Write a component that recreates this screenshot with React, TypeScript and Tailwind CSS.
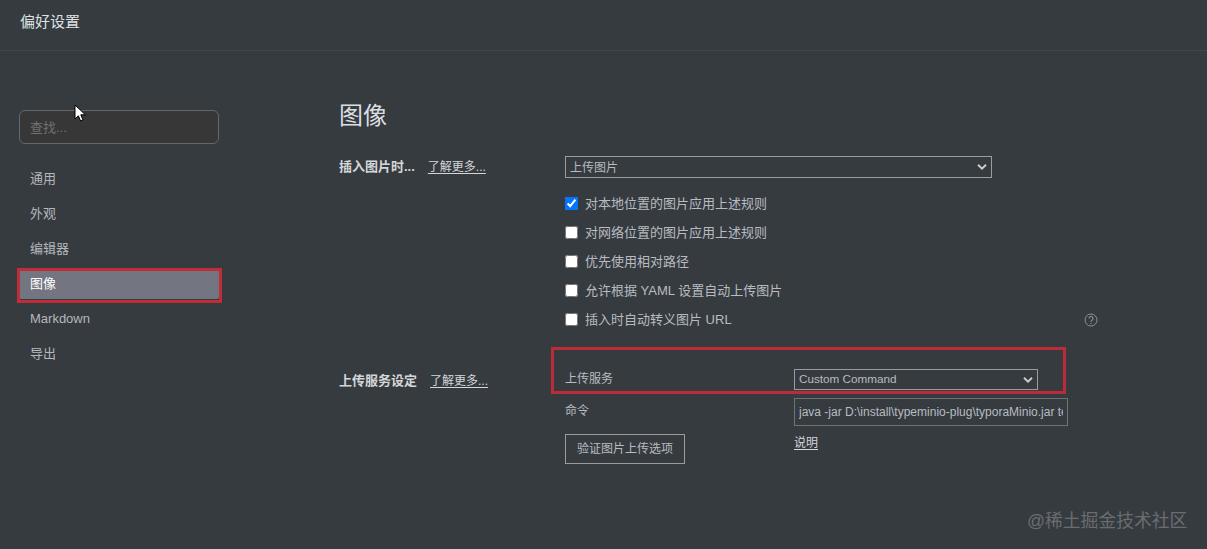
const font = "font-['Liberation_Sans','Noto_Sans_CJK_SC',sans-serif]";

function Nav({ label, active }: { label: string; active?: boolean }) {
  return (
    <div
      className={
        active
          ? "h-[31px] w-[200px] rounded-[2px] bg-[#737580] pl-[11px] flex items-center text-[13px] text-white"
          : "h-[31px] w-[200px] pl-[11px] flex items-center text-[13px] text-[#b4b8bd]"
      }
    >
      {label}
    </div>
  );
}

function Check({ label, checked }: { label: string; checked?: boolean }) {
  return (
    <label className="h-[29px] flex items-center gap-[7px] text-[13px] text-[#b8bcc0]">
      <input type="checkbox" defaultChecked={checked} className="w-[13px] h-[13px] m-0" />
      <span>{label}</span>
    </label>
  );
}

function More() {
  return <span className="text-[12px] text-[#d4d6d8] underline underline-offset-2">了解更多...</span>;
}

function Chevron() {
  return (
    <svg viewBox="0 0 10 7" className="absolute right-[5px] top-1/2 -translate-y-1/2 w-[10px] h-[7px] pointer-events-none" fill="none" stroke="#c9cbcd" strokeWidth="2">
      <path d="M1 1.2l4 4 4-4" />
    </svg>
  );
}

export default function App() {
  return (
    <div className={"relative w-full h-[549px] overflow-hidden bg-[#363b40] flex flex-col " + font}>
      <header className="h-[51px] shrink-0 border-b border-[#42474b] pl-5 pb-[6px] flex items-center text-[15px] text-[#dfe2e4]">
        偏好设置
      </header>
      <div className="flex flex-1">
        <aside className="w-[339px] shrink-0 pl-[19px] pt-[59px]">
          <input
            readOnly
            placeholder="查找..."
            className="w-[200px] h-[34px] rounded-[6px] border border-[#65686a] bg-[#373737] px-[10px] text-[13px] placeholder:text-[#6f7173] outline-none"
          />
          <div className="mt-[19px] flex flex-col gap-[4px]">
            <Nav label="通用" />
            <Nav label="外观" />
            <Nav label="编辑器" />
            <Nav label="图像" active />
            <Nav label="Markdown" />
            <Nav label="导出" />
          </div>
        </aside>
        <main className="flex-1 pt-[49px]">
          <h1 className="text-[24px] leading-[32px] text-[#dcdfe1]">图像</h1>
          <div className="mt-[24px] flex">
            <div className="w-[226px] shrink-0 flex items-center gap-[13px] h-[21px] self-start">
              <span className="text-[13px] font-bold text-[#d4d6d8]">插入图片时...</span>
              <More />
            </div>
            <div className="flex flex-col">
              <div className="relative w-[427px] h-[22px]">
                <select className="block appearance-none w-full h-full border border-[#9a9c9e] bg-transparent pl-[4px] pt-[1px] text-[12px] text-[#b8bcc0]" defaultValue="a">
                  <option value="a">上传图片</option>
                </select>
                <Chevron />
              </div>
              <div className="mt-[11px] w-[533px] flex flex-col relative">
                <Check label="对本地位置的图片应用上述规则" checked />
                <Check label="对网络位置的图片应用上述规则" />
                <Check label="优先使用相对路径" />
                <Check label="允许根据 YAML 设置自动上传图片" />
                <Check label="插入时自动转义图片 URL" />
                <svg viewBox="0 0 14 14" className="absolute right-0 bottom-[7px] w-[14px] h-[14px] text-[#8e9194]" fill="none" stroke="currentColor">
                  <circle cx="7" cy="7" r="6" strokeWidth="1" />
                  <path d="M5 5.5a2 2 0 1 1 3.2 1.6C7.4 7.7 7 8 7 9" strokeWidth="1.1" />
                  <path d="M7 10v1" strokeWidth="1.1" />
                </svg>
              </div>
            </div>
          </div>
          <div className="mt-[35px] flex">
            <div className="w-[226px] shrink-0 flex items-center gap-[13px] h-[21px] mt-[1px] self-start">
              <span className="text-[13px] font-bold text-[#d4d6d8]">上传服务设定</span>
              <More />
            </div>
            <div className="grid grid-cols-[229px_auto] content-start text-[12px] text-[#b8bcc0]">
              <div className="h-[20px] flex items-center">上传服务</div>
              <div className="relative w-[244px] h-[21px]">
                <select className="block appearance-none w-full h-full border border-[#9a9c9e] bg-transparent pl-[4px] pb-[2px] text-[11.7px] text-[#b8bcc0]" defaultValue="c">
                  <option value="c">Custom Command</option>
                </select>
                <Chevron />
              </div>
              <div className="mt-[9px] h-[28px] flex items-start pt-[3px]">命令</div>
              <input
                readOnly
                value="java -jar D:\install\typeminio-plug\typoraMinio.jar test"
                className="mt-[8px] w-[274px] h-[28px] border border-[#6f7376] bg-transparent px-[4px] text-[12px] text-[#b8bcc0] outline-none"
              />
              <button className="mt-[7px] w-[120px] h-[30px] border border-[#9a9c9e] text-[12px] text-[#b8bcc0]">验证图片上传选项</button>
              <div className="mt-[7px] text-[#d4d6d8] underline underline-offset-2">说明</div>
            </div>
          </div>
        </main>
      </div>

      {/* annotation boxes */}
      <div className="absolute left-[17px] top-[268px] w-[205px] h-[35px] border-[3px] border-[#c02c38] pointer-events-none" />
      <div className="absolute left-[551px] top-[347px] w-[515px] h-[47px] border-[3px] border-[#bb2c38] pointer-events-none" />

      {/* cursor */}
      <svg viewBox="0 0 12 19" className="absolute left-[74px] top-[104px] w-[12px] h-[19px]">
        <path d="M1 1v14l3.4-3.2 2.2 5.2 2.4-1-2.2-5.2h4.6z" fill="#fff" stroke="#000" strokeWidth="1" />
      </svg>

      {/* watermark */}
      <div className="absolute left-[1027px] top-[509px] text-[17.8px] leading-[24px] text-[#6a6d70]">@稀土掘金技术社区</div>
    </div>
  );
}
